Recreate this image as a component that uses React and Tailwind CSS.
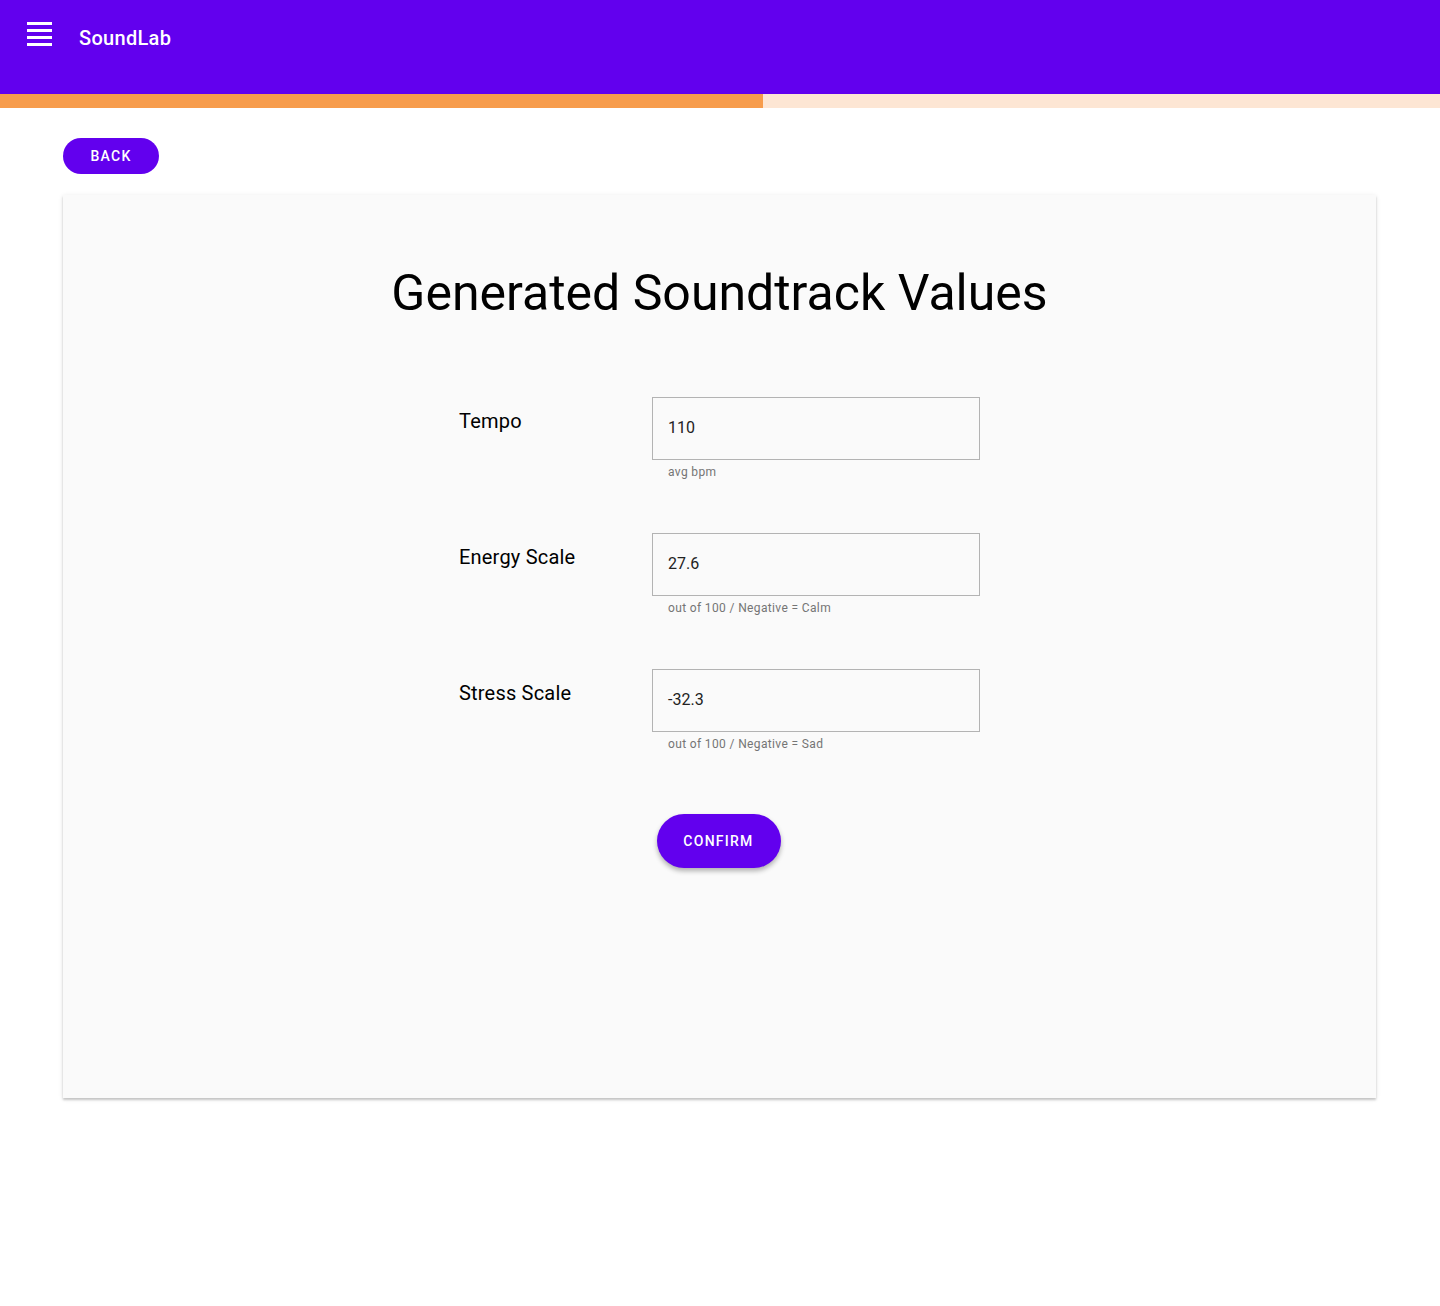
const fields = [
  { label: 'Tempo', value: '110', hint: 'avg bpm' },
  { label: 'Energy Scale', value: '27.6', hint: 'out of 100 / Negative = Calm' },
  { label: 'Stress Scale', value: '-32.3', hint: 'out of 100 / Negative = Sad' },
];

const Menu = () => (
  <svg width="25" height="24" viewBox="0 0 25 24" fill="white">
    <rect x="0" y="0" width="25" height="3" />
    <rect x="0" y="7" width="25" height="3" />
    <rect x="0" y="14" width="25" height="3" />
    <rect x="0" y="21" width="25" height="3" />
  </svg>
);

export default function App() {
  return (
    <div className="min-h-[1306px] bg-white font-['Roboto',sans-serif]">
      <header className="h-[94px] bg-[#6200ee] flex items-start">
        <div className="pl-[27px] pt-[22px]">
          <Menu />
        </div>
        <span className="ml-[27px] mt-[25px] text-[20px] leading-[26px] font-medium tracking-[0.015em] text-white">SoundLab</span>
      </header>
      <div className="h-[14px] bg-[#fde6d4] flex">
        <div className="w-[763px] bg-[#f79c4c]"></div>
      </div>

      <div className="px-[63px] pt-[30px]">
        <button className="h-9 w-24 rounded-full bg-[#6200ee] text-white text-sm font-medium tracking-[0.09em] uppercase">
          Back
        </button>

        <div className="mt-[21px] h-[903px] w-[1313px] bg-[#fafafa] shadow-[0_2px_2px_rgba(0,0,0,0.18),0_1px_5px_rgba(0,0,0,0.1)] flex flex-col items-center">
          <h1 className="mt-[69px] text-[50px] leading-[58px] text-black">Generated Soundtrack Values</h1>

          <div className="mt-[75px] flex flex-col gap-[53px]">
            {fields.map((f) => (
              <div key={f.label} className="flex">
                <div className="w-[193px] pt-[12px] text-[20px] leading-[24px] tracking-[0.01em] text-black">{f.label}</div>
                <div className="w-[328px]">
                  <div className="h-[63px] border border-[#b3b3b3] flex items-center px-[15px] pb-px text-[16px] text-[#222]">
                    {f.value}
                  </div>
                  <div className="mt-[4px] pl-[16px] text-[12px] leading-[16px] tracking-[0.03em] text-[#757575]">{f.hint}</div>
                </div>
              </div>
            ))}
          </div>

          <button className="mt-[62px] h-[54px] w-[124px] -translate-x-px rounded-full bg-[#6200ee] text-white text-sm font-medium tracking-[0.09em] uppercase shadow-[0_3px_5px_rgba(0,0,0,0.3)]">
            Confirm
          </button>
        </div>
      </div>
    </div>
  );
}
